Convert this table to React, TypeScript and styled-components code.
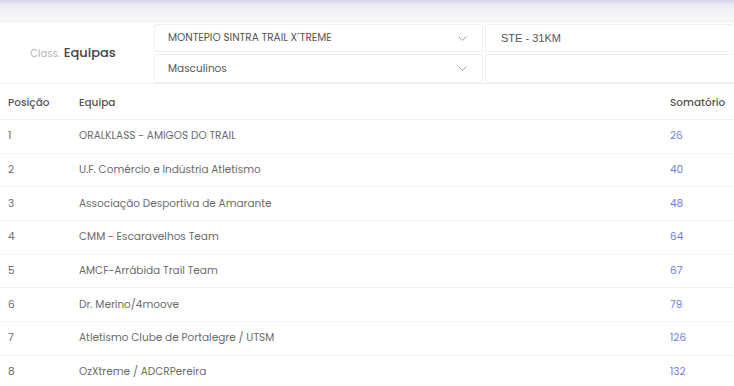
import styled, { createGlobalStyle } from "styled-components";

const GlobalStyle = createGlobalStyle`
  html, body {
    margin: 0;
    padding: 0;
    background: #fff;
  }
  body {
    font-family: "Poppins", "Inter", "Noto Sans", sans-serif;
    color: #666;
  }
`;

// @ts-ignore
const Page = styled.div`
  width: 100%;
  display: flex;
  flex-direction: column;
`;

// @ts-ignore
const TopBand = styled.div`
  height: 23px;
  background: linear-gradient(180deg, #d5d1ef 0px, #ebeaf5 5px, #f4f4f6 11px, #f6f6f7 23px);
`;

// @ts-ignore
const Filters = styled.section`
  display: grid;
  grid-template-columns: 152px 329px 1fr;
  column-gap: 2px;
  padding-top: 1px;
  border-bottom: 1px solid #eceef2;
`;

// @ts-ignore
const TitleCell = styled.div`
  display: flex;
  align-items: center;
  justify-content: center;
  gap: 4px;
  padding: 0 6px 1px 0;
`;

// @ts-ignore
const Small = styled.span`
  font-size: 10px;
  color: #b4b4b8;
  margin-top: 2px;
`;

// @ts-ignore
const Title = styled.span`
  font-size: 13px;
  font-weight: 500;
  color: #444;
`;

// @ts-ignore
const Stack = styled.div`
  display: flex;
  flex-direction: column;
  gap: 2px;
`;

// @ts-ignore
const Box = styled.div<{ $plain?: boolean }>`
  height: 28px;
  box-sizing: border-box;
  display: flex;
  align-items: center;
  justify-content: space-between;
  padding: 0 15px 0 ${(p) => (p.$plain ? "15px" : "13px")};
  border: 1px solid #eef0f3;
  border-right-color: ${(p) => (p.$plain ? "transparent" : "#eef0f3")};
  border-radius: 3px;
  background: #fff;
  font-size: ${(p) => (p.$plain ? "11px" : "10.5px")};
  font-family: ${(p) =>
    p.$plain ? `"Liberation Sans", Arial, sans-serif` : "inherit"};
  color: #555;
  &:last-child {
    height: 29px;
  }
`;

// @ts-ignore
const Table = styled.table`
  width: 100%;
  border-collapse: collapse;
  margin-top: 3px;
  font-size: 10.5px;
`;

// @ts-ignore
const Th = styled.th<{ $right?: boolean }>`
  text-align: left;
  font-weight: 500;
  color: #555;
  height: 32px;
  padding: 0 0 0 8px;
  border-bottom: 1px solid #eef0f3;
  width: ${(p) => (p.$right ? "64px" : "auto")};
`;

// @ts-ignore
const Td = styled.td<{ $score?: boolean }>`
  height: 32.7px;
  padding: 0 0 0 8px;
  border-bottom: 1px solid #f1f2f5;
  color: ${(p) => (p.$score ? "#717ce4" : "#6b6b6b")};
  &:first-child {
    width: 63px;
  }
`;

const rows: [number, string, number][] = [
  [1, "ORALKLASS - AMIGOS DO TRAIL", 26],
  [2, "U.F. Comércio e Indústria Atletismo", 40],
  [3, "Associação Desportiva de Amarante", 48],
  [4, "CMM - Escaravelhos Team", 64],
  [5, "AMCF-Arrábida Trail Team", 67],
  [6, "Dr. Merino/4moove", 79],
  [7, "Atletismo Clube de Portalegre / UTSM", 126],
  [8, "OzXtreme / ADCRPereira", 132],
];

function Chevron() {
  return (
    <svg width="9" height="5" viewBox="0 0 9 5" fill="none">
      <path d="M0.5 0.5l4 4 4-4" stroke="#9ba0a8" strokeWidth="1" />
    </svg>
  );
}

function App() {
  return (
    <Page>
      <GlobalStyle />
      <TopBand />
      <Filters>
        <TitleCell>
          <Small>Class.</Small>
          <Title>Equipas</Title>
        </TitleCell>
        <Stack>
          <Box>
            MONTEPIO SINTRA TRAIL X´TREME
            <Chevron />
          </Box>
          <Box>
            Masculinos
            <Chevron />
          </Box>
        </Stack>
        <Stack>
          <Box $plain>STE - 31KM</Box>
          <Box $plain />
        </Stack>
      </Filters>
      <Table>
        <thead>
          <tr>
            <Th>Posição</Th>
            <Th>Equipa</Th>
            <Th $right>Somatório</Th>
          </tr>
        </thead>
        <tbody>
          {rows.map(([pos, team, score]) => (
            <tr key={pos}>
              <Td>{pos}</Td>
              <Td>{team}</Td>
              <Td $score>{score}</Td>
            </tr>
          ))}
        </tbody>
      </Table>
    </Page>
  );
}

export default App;
